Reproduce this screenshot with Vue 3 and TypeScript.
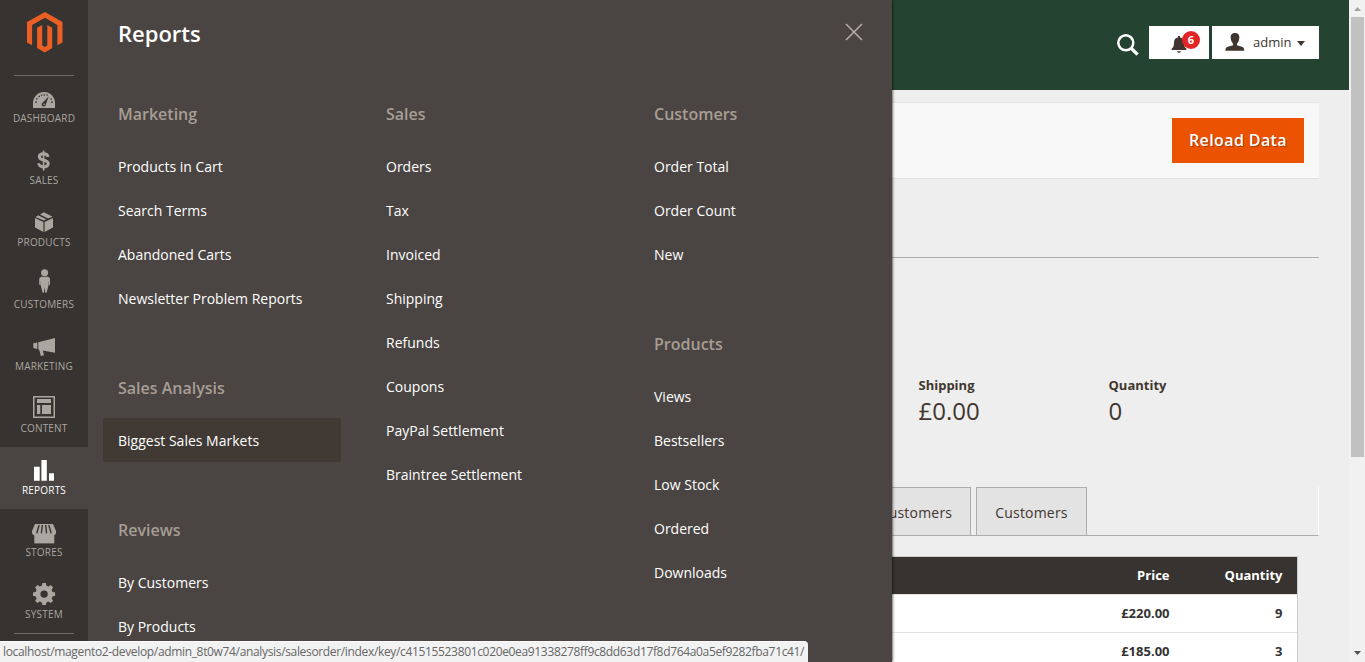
<script setup lang="ts">
interface NavItem { id: string; label: string }
interface MenuGroup { title: string; items: string[] }

const nav: NavItem[] = [
  'Dashboard', 'Sales', 'Products', 'Customers', 'Marketing', 'Content', 'Reports', 'Stores', 'System',
].map((label) => ({ id: label.toLowerCase(), label }))

const columns: MenuGroup[][] = [
  [
    { title: 'Marketing', items: ['Products in Cart', 'Search Terms', 'Abandoned Carts', 'Newsletter Problem Reports'] },
    { title: 'Sales Analysis', items: ['Biggest Sales Markets'] },
    { title: 'Reviews', items: ['By Customers', 'By Products'] },
  ],
  [
    { title: 'Sales', items: ['Orders', 'Tax', 'Invoiced', 'Shipping', 'Refunds', 'Coupons', 'PayPal Settlement', 'Braintree Settlement'] },
  ],
  [
    { title: 'Customers', items: ['Order Total', 'Order Count', 'New'] },
    { title: 'Products', items: ['Views', 'Bestsellers', 'Low Stock', 'Ordered', 'Downloads'] },
  ],
]

const hovered = 'Biggest Sales Markets'
const totals = [
  { label: 'Shipping', value: '£0.00' },
  { label: 'Quantity', value: '0' },
]
const rows = [
  { price: '£220.00', qty: 9 },
  { price: '£185.00', qty: 3 },
]
const link = 'localhost/magento2-develop/admin_8t0w74/analysis/salesorder/index/key/c41515523801c020e0ea91338278ff9c8dd63d17f8d764a0a5ef9282fba71c41/'
</script>

<template>
  <div class="app">
    <nav class="sidebar">
      <div class="brand">
        <svg width="36" height="41" viewBox="0 0 36 41" fill="#eb5f25">
          <path d="M18 0 35.5 10.1V30.5L30.4 33.2V13L18 5.8 5.1 13V33.2L0 30.5V10.1Z" />
          <path d="M10.1 15.8 15.2 13V33.4L17.8 35 20.3 33.4V13L25.2 15.8V36.1L17.8 40.5 10.1 36.1Z" />
        </svg>
      </div>
      <a v-for="n in nav" :key="n.id" class="nav-item" :class="{ active: n.id === 'reports' }">
        <svg class="icon" width="26" height="26" viewBox="0 0 26 26" fill="currentColor">
          <g v-if="n.id === 'dashboard'" transform="translate(0 1)">
            <path d="M2 21V16A11 11 0 0 1 24 16V21Z" />
            <g fill="#373330">
              <path d="M17.8 9.2 14.8 17.4A2.1 2.1 0 1 1 11.8 15.4Z" />
              <rect x="4" y="14.5" width="2" height="1.2" /><rect x="5" y="11.2" width="1.5" height="1.3" />
              <rect x="7.6" y="8.7" width="1.4" height="1.4" /><rect x="10" y="7.4" width="1.2" height="1.5" />
              <rect x="12.7" y="7" width="1.2" height="1.6" /><rect x="15.5" y="7.3" width="1.2" height="1.4" />
              <rect x="19.4" y="11.3" width="1.5" height="1.3" /><rect x="20" y="14.5" width="2" height="1.2" />
            </g>
            <circle cx="13" cy="17.3" r=".8" />
          </g>
          <g v-else-if="n.id === 'sales'" transform="translate(-.3 -.4)" fill="none" stroke="currentColor">
            <path d="M17.2 9.2C16.8 5.2 8.6 5.2 8.6 9.2 8.6 13.6 17.6 11.5 17.6 16 17.6 20.5 8.1 20.4 8 15.7" stroke-width="3" />
            <path d="M12.9 3V23" stroke-width="1.7" />
          </g>
          <g v-else-if="n.id === 'products'" transform="translate(0 -1.4)">
            <path d="M4 9.5 12.4 13.3V23.4L4 18.8Z M13.6 13.3 22 9.5V18.8L13.6 23.4Z" />
            <path d="M4.4 8.3 7.6 6.7 15.6 10.5 13 12Z M9 6 12.8 3.6 21.6 8.2 17 10Z" />
            <path d="M7.7 6.5 16.5 10.8" stroke="#373330" stroke-width=".9" />
          </g>
          <g v-else-if="n.id === 'customers'" transform="translate(0 -3.3)">
            <circle cx="13.6" cy="4" r="3.5" />
            <path d="M10.5 8H16.8Q19 8.2 19 10.5V15.8L17.5 17V13H17.2V18L15.6 24H14.4L13.7 18.5 13 24H11.7L10 18V13H9.8V17L8.2 15.8V10.5Q8.3 8.2 10.5 8Z" />
          </g>
          <template v-else-if="n.id === 'marketing'">
            <path d="M24 4V18.8L11.8 16.4V16.8L13 21.3 9.9 22 8.2 15.8 7.3 15.6V8.2Z M2.3 9.3 6.3 8.6V15L2.3 14Z" />
          </template>
          <g v-else-if="n.id === 'content'" transform="translate(0 -2)">
            <path fill-rule="evenodd" d="M2 2H24V24H2ZM3.5 3.5V22.5H22.5V3.5ZM6 5H20V9H6ZM6 11H9.3V20H6ZM11 11H20V20H11Z" />
          </g>
          <template v-else-if="n.id === 'reports'">
            <path d="M3 8.7H8.7V22.7H3ZM10.4 2H15.8V22.7H10.4ZM18 15.3H23V22.7H18Z" />
          </template>
          <template v-else-if="n.id === 'stores'">
            <path d="M3.3 14H23.3V23.4H3.3Z" />
            <path d="M4 4H22L25 11V13Q24.6 15.3 22.6 15.3T20 13Q19.5 15.3 17.8 15.3T15.4 13Q15 15.3 13 15.3T10.7 13Q10.2 15.3 8.4 15.3T6 13Q5.4 15.3 3.5 15.3T1 13V11Z" />
            <path d="M8.2 5 5.8 13M11.4 5 10.4 13M14.7 5 15.5 13M17.8 5 20.1 13" fill="none" stroke="#373330" stroke-width="1.4" />
          </template>
          <g v-else transform="translate(0 -1)">
            <path fill-rule="evenodd" d="M10.8 4.7 11.4 2H14.8L15.4 4.7 17.5 5.6 19.8 4.1 22.1 6.4 20.6 8.8 21.5 10.9 24.1 11.4V14.8L21.5 15.4 20.6 17.5 22.1 19.8 19.8 22.1 17.5 20.6 15.4 21.5 14.8 24H11.4L10.8 21.5 8.7 20.6 6.4 22.1 4.1 19.8 5.6 17.5 4.7 15.4 2 14.8V11.4L4.7 10.9 5.6 8.8 4.1 6.4 6.4 4.1 8.7 5.6ZM13.1 9.4A3.7 3.7 0 1 0 13.1 16.8 3.7 3.7 0 1 0 13.1 9.4Z" />
          </g>
        </svg>
        <span>{{ n.label }}</span>
      </a>
      <hr class="end-line">
    </nav>

    <main class="page">
      <header class="topbar">
        <svg class="search" width="22" height="22" viewBox="0 0 22 22" fill="none" stroke="#fff">
          <circle cx="8.8" cy="8.8" r="7.5" stroke-width="2.5" /><path d="m14 14 6.6 6.6" stroke-width="3.3" />
        </svg>
        <div class="bell">
          <svg width="16" height="17" viewBox="0 0 16 17" fill="#41362f">
            <path d="M7 0H9V1.4Q13 2 13 6.4 13 11 15.4 12.7V14H.6V12.7Q3 11 3 6.4 3 2 7 1.4ZM6 15.2H10Q9.5 16.8 8 16.8T6 15.2Z" />
          </svg>
          <b class="badge">6</b>
        </div>
        <div class="account">
          <svg width="20" height="18" viewBox="0 0 20 18" fill="#41362f">
            <path d="M10 0C6.7 0 5.4 2.2 5.7 5.2L6.4 8.3 8 10.7V12.3L2 14Q.3 14.6.3 17.7H19.3Q19.3 14.6 17.6 14L12 12.3V10.7L13.6 8.3 14.3 5.2C14.6 2.2 13.3 0 10 0Z" />
          </svg>
          <span>admin</span>
          <svg class="caret" width="8" height="5" viewBox="0 0 8 5" fill="#41362f"><path d="M0 0H8L4 5Z" /></svg>
        </div>
      </header>
      <section class="content">
        <div class="actions"><button class="reload">Reload Data</button></div>
        <div class="rule"></div>
        <div class="totals">
          <div v-for="t in totals" :key="t.label" class="total">
            <b>{{ t.label }}</b>
            <span>{{ t.value }}</span>
          </div>
        </div>
        <div class="tabs">
          <span class="tab">New Customers</span>
          <span class="tab">Customers</span>
        </div>
        <div class="grid">
          <div class="row head"><span>Price</span><span>Quantity</span></div>
          <div v-for="r in rows" :key="r.price" class="row"><span>{{ r.price }}</span><span>{{ r.qty }}</span></div>
        </div>
      </section>
    </main>

    <div class="scrollbar">
      <svg width="7" height="4" viewBox="0 0 7 4" fill="#a3a3a3"><path d="M0 4 3.5 0 7 4Z" /></svg>
      <div class="thumb"></div>
      <svg width="7" height="4" viewBox="0 0 7 4" fill="#505050"><path d="M0 0 3.5 4 7 0Z" /></svg>
    </div>

    <div class="submenu">
      <div class="submenu-head">
        <h2>Reports</h2>
        <svg width="18" height="18" viewBox="0 0 18 18" stroke="#b5aca2" stroke-width="1.6"><path d="m1 1 16 16M17 1 1 17" /></svg>
      </div>
      <div class="columns">
        <div v-for="(col, i) in columns" :key="i" class="column">
          <div v-for="g in col" :key="g.title" class="group">
            <h3>{{ g.title }}</h3>
            <a v-for="item in g.items" :key="item" :class="{ hover: item === hovered }">{{ item }}</a>
          </div>
        </div>
      </div>
    </div>

    <div class="status"><span>{{ link }}</span></div>
  </div>
</template>

<style>
body { margin: 0; overflow: hidden; }
</style>

<style scoped>
* { box-sizing: border-box; }
.app { position: relative; display: flex; width: 1365px; height: 662px; overflow: hidden; background: #eee; color: #41362f; font-family: "Open Sans", "Noto Sans", sans-serif; font-size: 14px; }

.sidebar { flex: 0 0 88px; height: 662px; background: #373330; color: #aaa6a0; }
.brand { height: 75px; padding: 12px 0 0 27px; }
.brand svg { display: block; }
.brand::after { content: ""; display: block; width: 60px; height: 1px; margin: 22px 0 0 -13px; background: #736963; }
.nav-item { display: flex; flex-direction: column; align-items: center; height: 62px; padding-top: 11px; font-size: 10px; line-height: 14px; letter-spacing: .2px; text-transform: uppercase; }
.nav-item span { margin-top: -1px; }
.nav-item.active { background: #4a4542; color: #fff; }
.icon { display: block; overflow: visible; }
.end-line { width: 60px; height: 1px; margin: 0 14px; border: 0; background: #736963; }

.page { flex: 1; display: flex; flex-direction: column; }
.topbar { display: flex; flex: 0 0 90px; align-items: flex-start; justify-content: flex-end; height: 90px; padding: 26px 30px 0 0; background: #244431; }
.search { margin: 7.5px 10.5px 0 0; }
.bell { position: relative; width: 60px; height: 33px; margin-right: 3px; padding: 10px 0 0 22px; background: #fff; }
.bell svg { display: block; }
.badge { position: absolute; left: 33px; top: 5px; width: 18px; height: 18px; border-radius: 9px; background: #e22626; color: #fff; font-size: 11px; line-height: 18px; text-align: center; }
.account { display: flex; align-items: center; width: 107px; height: 33px; padding: 0 0 1px 13px; background: #fff; font-size: 13px; }
.account span { margin-left: 8px; }
.caret { margin: 2px 0 0 6px; }

.content { flex: 1; width: 1231px; padding-top: 12px; }
.actions { display: flex; justify-content: flex-end; height: 77px; padding: 15px 15px 0 0; background: #f8f8f8; border: solid #e3e3e3; border-width: 1px 0; }
.reload { width: 132px; height: 45px; padding: 0 0 1px; border: 0; background: #eb5202; color: #fff; font: 600 16px "Open Sans", sans-serif; letter-spacing: .4px; text-shadow: 1px 1px 0 rgba(0, 0, 0, .3); }
.rule { height: 79px; border-bottom: 1px solid #adadad; }
.totals { display: flex; height: 229px; padding: 118px 0 0 830.5px; }
.total { width: 190px; }
.total b { display: block; font-size: 13px; font-weight: 700; line-height: 19px; }
.total span { display: block; font-size: 24px; line-height: 31px; }
.tabs { display: flex; gap: 5px; height: 49px; padding-left: 739px; border-bottom: 1px solid #adadad; border-right: 1px solid #fff; }
.tab { padding: 0 18px; border: 1px solid #adadad; border-bottom: 0; background: #e3e3e3; line-height: 49px; height: 48px; letter-spacing: .2px; }
.grid { width: 1210px; margin-top: 20px; border: solid #ccc; border-width: 1px 1px 0 0; background: #fff; font-size: 13px; font-weight: 700; }
.row { display: flex; justify-content: flex-end; height: 38px; padding-right: 14.5px; border-bottom: 1px solid #e3e3e3; line-height: 37px; color: #333; }
.row span { width: 113px; text-align: right; }
.head { background: #373330; color: #fff; }

.scrollbar { display: flex; flex: 0 0 16px; flex-direction: column; align-items: center; height: 662px; padding: 7px 0; background: #f1f1f1; }
.thumb { width: 13px; height: 440px; margin: 6px 0 auto 1px; background: #c1c1c1; }

.submenu { position: absolute; left: 88px; top: 0; width: 804px; height: 662px; background: #4a4542; box-shadow: 0 0 3px #000; clip-path: inset(0 -6px 0 0); }
.submenu-head { display: flex; justify-content: space-between; height: 104px; padding: 18px 29px 0 30px; color: #fff; }
h2 { margin: 0; font-size: 22px; font-weight: 600; line-height: 30px; }
.submenu-head svg { margin-top: 5px; }
.columns { display: flex; gap: 30px; padding-left: 15px; }
.column { width: 238px; }
.group { margin-bottom: 58px; }
h3 { margin: 0 0 20px; padding-left: 15px; color: #a79d95; font-size: 16px; font-weight: 600; line-height: 20px; }
.group a { display: block; height: 44px; padding-left: 15px; color: #fff; line-height: 46px; white-space: nowrap; }
.group a.hover { background: #403934; }

.status { position: absolute; left: 0; bottom: 0; width: 808px; height: 21px; padding-left: 3px; border-top: 1px solid #fafafa; border-radius: 0 4px 0 0; background: #f2f2f2; color: #666; font-size: 12px; line-height: 20px; letter-spacing: -.34px; white-space: nowrap; }
</style>
